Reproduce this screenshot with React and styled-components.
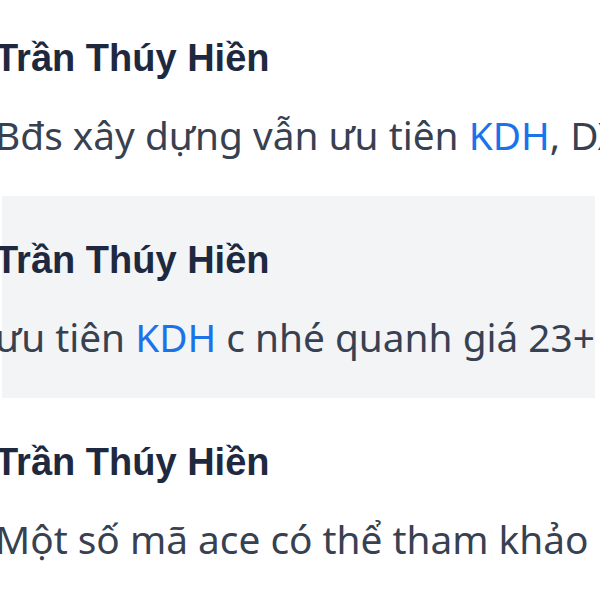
import React from 'react'
import styled, { createGlobalStyle } from 'styled-components'

const GlobalStyle = createGlobalStyle`
  html, body {
    margin: 0;
    padding: 0;
    background: #ffffff;
    overflow: hidden;
  }
  body {
    font-family: "Liberation Sans", Arial, sans-serif;
  }
`

const comments = [
  { id: 1, name: 'Trần Thúy Hiền', parts: ['Bđs xây dựng vẫn ưu tiên ', { tag: 'KDH' }, ', DXG, NLG, PDR'] },
  { id: 2, name: 'Trần Thúy Hiền', parts: ['ưu tiên ', { tag: 'KDH' }, ' c nhé quanh giá 23+'], active: true },
  { id: 3, name: 'Trần Thúy Hiền', parts: ['Một số mã ace có thể tham khảo'] },
]

const CommentList = () => {
  return (
    <>
      <GlobalStyle />
      <List>
        {comments.map((c) => (
          <Row key={c.id} $active={c.active}>
            <Name>{c.name}</Name>
            <Body>
              {c.parts.map((p, i) =>
                typeof p === 'string' ? <span key={i}>{p}</span> : <Tag key={i}>{p.tag}</Tag>
              )}
            </Body>
          </Row>
        ))}
      </List>
    </>
  )
}

const List = styled.div`
  width: 600px;
  height: 600px;
  overflow: hidden;
  display: flex;
  flex-direction: column;
  margin-top: -6px;
`

const Row = styled.div`
  height: 202px;
  box-sizing: border-box;
  padding: 40px 0 0 0;
  margin: 0 5px 0 2px;
  background: ${(p) => (p.$active ? '#f3f4f6' : 'transparent')};
  display: flex;
  flex-direction: column;
  gap: 29px;
  flex-shrink: 0;
`

const Name = styled.div`
  font-size: 38px;
  line-height: 48px;
  font-weight: 700;
  color: #1e293f;
  white-space: nowrap;
  margin-left: -7px;
`

const Body = styled.div`
  font-family: "Noto Sans", "Liberation Sans", sans-serif;
  font-size: 38.8px;
  line-height: 48px;
  color: #374151;
  white-space: nowrap;
  margin-left: -7px;
`

const Tag = styled.span`
  color: #1a73e8;
`

export default CommentList
